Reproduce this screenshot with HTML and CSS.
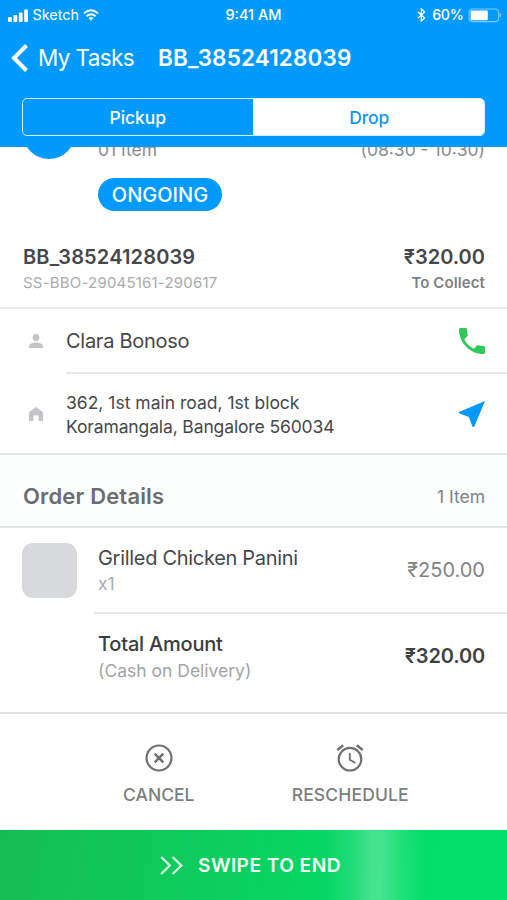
FILE: index.html
```html
<!DOCTYPE html>
<html lang="en">
<head>
<meta charset="utf-8">
<title>My Tasks</title>
<link rel="stylesheet" href="styles.css">
</head>
<body>
<header class="header">
  <div class="status">
    <div class="status-left">
      <svg class="signal" width="20" height="13" viewBox="0 0 20 13"><rect x="0" y="8" width="3.8" height="5" rx="1"/><rect x="5.4" y="6" width="3.8" height="7" rx="1"/><rect x="10.8" y="3.500" width="3.8" height="9.500" rx="1"/><rect x="16.2" y="0.500" width="3.8" height="12.500" rx="1"/></svg>
      <span class="carrier">Sketch</span>
      <svg class="wifi" width="16" height="12" viewBox="0 0 16 12"><path d="M1 4.400Q8 -1.800 15 4.400M3.500 7.200Q8 3.200 12.500 7.200" fill="none" stroke="#fff" stroke-width="1.900"/><path d="M5.500 9Q8 6.800 10.500 9L8 11.700Z"/></svg>
    </div>
    <span class="time">9:41 AM</span>
    <div class="status-right">
      <svg class="bluetooth" width="9" height="14" viewBox="0 0 9 14"><path d="M1 4L7.600 10 4.300 13V1L7.600 4 1 10" fill="none" stroke="#fff" stroke-width="1.300"/></svg>
      <span class="percent">60%</span>
      <svg class="battery" width="34" height="15" viewBox="0 0 34 15"><rect x="1" y="1" width="29.500" height="12.600" rx="3" fill="none" stroke="#fff" stroke-opacity=".45" stroke-width="1.100"/><rect x="2.600" y="2.400" width="17.200" height="9.800" rx="1"/><path d="M31.600 5c1.800.7 1.800 4 0 4.700z" opacity=".6"/></svg>
    </div>
  </div>
  <nav class="nav">
    <svg class="back" width="17" height="28" viewBox="0 0 17 28"><path d="M15.500 1.500L3 14 15.500 26.500" fill="none" stroke="#fff" stroke-width="4"/></svg>
    <span class="nav-back">My Tasks</span>
    <h1 class="nav-title">BB_38524128039</h1>
  </nav>
  <div class="segmented">
    <span class="segment">Pickup</span>
    <span class="segment segment-on">Drop</span>
  </div>
</header>

<section class="summary">
  <div class="slot">
    <span class="avatar"></span>
    <span class="slot-items">01 Item</span>
    <span class="slot-time">(08:30 - 10:30)</span>
  </div>
  <div class="badge">ONGOING</div>
  <div class="order">
    <div>
      <div class="order-id">BB_38524128039</div>
      <div class="order-ref">SS-BBO-29045161-290617</div>
    </div>
    <div class="order-pay">
      <div class="price price-dark">₹320.00</div>
      <div class="collect">To Collect</div>
    </div>
  </div>
</section>

<section class="contact">
  <div class="row row-person">
    <svg class="row-icon" width="14" height="14" viewBox="0 0 14 14"><circle cx="7" cy="3.500" r="3.400"/><path d="M0 14v-1.800C0 9.800 4 8.600 7 8.600s7 1.200 7 3.600V14z"/></svg>
    <div class="row-body">
      <span class="person">Clara Bonoso</span>
      <svg class="action" width="26" height="26" viewBox="3 3 18 18"><path fill="#32c75f" d="M6.620 10.790c1.440 2.830 3.760 5.140 6.590 6.590l2.200-2.200c.27-.27.67-.36 1.020-.24 1.120.37 2.330.57 3.570.57.550 0 1 .45 1 1V20c0 .55-.45 1-1 1-9.390 0-17-7.610-17-17 0-.55.450-1 1-1h3.500c.550 0 1 .45 1 1 0 1.250.2 2.450.57 3.570.110.35.030.74-.250 1.020l-2.200 2.200z"/></svg>
    </div>
  </div>
  <div class="row row-place">
    <svg class="row-icon" width="14" height="14" viewBox="0 0 14 14"><path d="M7 0L13.200 4.600Q14 5.200 14 6.200V14H9.600V9.600Q9.600 8.200 8.200 8.200H5.800Q4.400 8.200 4.400 9.600V14H0V6.200Q0 5.200 .8 4.600Z"/></svg>
    <div class="row-body">
      <div class="address"><div>362, 1st main road, 1st block</div><div class="address-city">Koramangala, Bangalore 560034</div></div>
      <svg class="action" width="26" height="26" viewBox="3 3 18 18"><path fill="#0798fc" d="M21 3L3 10.530v.980l6.840 2.650L12.480 21h.980L21 3z"/></svg>
    </div>
  </div>
</section>

<div class="details-head">
  <h2 class="details-title">Order Details</h2>
  <span class="details-count">1 Item</span>
</div>

<section class="items">
  <div class="item">
    <span class="thumb"></span>
    <div class="item-text">
      <div class="item-name">Grilled Chicken Panini</div>
      <div class="item-qty">x1</div>
    </div>
    <div class="price price-light">₹250.00</div>
  </div>
  <div class="total">
    <div class="item-text">
      <div class="total-name">Total Amount</div>
      <div class="total-note">(Cash on Delivery)</div>
    </div>
    <div class="price price-total">₹320.00</div>
  </div>
</section>

<section class="actions">
  <div class="choice">
    <svg width="28" height="28" viewBox="0 0 28 28"><circle cx="14" cy="14" r="12.500"/><path stroke-width="2.500" d="M9.700 9.700L18.300 18.300M18.300 9.700L9.700 18.300"/></svg>
    <span>CANCEL</span>
  </div>
  <div class="choice choice-later">
    <svg width="28" height="28" viewBox="0 0 28 28"><circle cx="14" cy="15.200" r="11.300"/><path d="M13.800 8.900V15.700L19.400 19.100" stroke-width="1.800"/><path d="M1.300 6L7.200 1.200M20.800 1.200L26.700 6" stroke-width="2.400"/></svg>
    <span>RESCHEDULE</span>
  </div>
</section>

<footer class="swipe">
  <svg width="23" height="19" viewBox="0 0 23 19"><path d="M1.200 1L9.800 9.500 1.200 18M12.600 1L21.200 9.500 12.600 18" fill="none" stroke="#d8ffe4" stroke-width="2.300"/></svg>
  <span class="swipe-label">SWIPE TO END</span>
</footer>
</body>
</html>
```

FILE: styles.css
```css
* { box-sizing: border-box; }
body {
  margin: 0;
  width: 507px;
  height: 900px;
  overflow: hidden;
  background: #fff;
  color: #45484b;
  font-family: Inter, "Liberation Sans", sans-serif;
  display: flex;
  flex-direction: column;
  white-space: nowrap;
}
h1, h2 { margin: 0; }
svg { display: block; flex: none; }

.header { height: 147px; flex: none; background: #029aff; color: #fff; }
.status {
  height: 30px;
  padding: 0 5px 0 8px;
  display: grid;
  grid-template-columns: 1fr auto 1fr;
  align-items: center;
  font-size: 14.500px;
  line-height: 30px;
  fill: #fff;
}
.status-left, .status-right { display: flex; align-items: center; }
.status-right { justify-content: flex-end; }
.carrier { margin-left: 4.500px; letter-spacing: -0.050px; }
.wifi { margin-left: 4px; margin-top: -1px; }
.time { font-weight: 500; font-size: 14.500px; margin-left: -3px; }
.percent { margin: 0 4.500px 0 6.500px; font-weight: 500; font-size: 14.200px; letter-spacing: -0.300px; }

.nav { height: 56px; display: flex; align-items: center; padding-left: 11px; line-height: 56px; }
.nav-back { margin-left: 10px; font-size: 22.500px; width: 120px; letter-spacing: -0.640px; }
.nav-title { font-size: 22.500px; font-weight: 600; letter-spacing: 0.150px; }

.segmented {
  margin: 12px 22px 0;
  height: 38px;
  border: 1.500px solid #d5efff;
  border-radius: 5px;
  display: flex;
  overflow: hidden;
  font-size: 17.500px;
  font-weight: 500;
  letter-spacing: -0.100px;
}
.segment { flex: 1; display: flex; align-items: center; justify-content: center; }
.segment-on { background: #fff; color: #0f96f3; padding-left: 2px; }

.summary { height: 162px; flex: none; border-bottom: 2px solid #ebebec; overflow: hidden; padding: 0 22px 0 23px; }
.slot { height: 31px; display: flex; align-items: flex-start; color: #8a8b8d; font-size: 17.500px; line-height: 24px; }
.avatar { width: 52px; height: 52px; margin: -40px 23px 0 0; border-radius: 50%; background: #029aff; }
.slot-items, .slot-time { margin-top: -9px; }
.slot-time { margin-left: auto; }
.badge {
  margin-left: 75px;
  width: 124px;
  height: 33px;
  border-radius: 17px;
  background: #029aff;
  color: #fff;
  font-size: 20px;
  font-weight: 500;
  display: flex;
  align-items: center;
  justify-content: center;
}
.order { display: flex; justify-content: space-between; margin-top: 33px; line-height: 26px; }
.order-id { font-size: 20px; font-weight: 600; letter-spacing: 0.150px; }
.order-ref { font-size: 15px; color: #a9abad; letter-spacing: 0.200px; }
.order-pay { text-align: right; }
.price { font-size: 20px; }
.price-dark { font-weight: 600; }
.collect { font-size: 15px; font-weight: 600; color: #7d7f81; letter-spacing: 0.100px; }

.row { display: flex; align-items: center; padding-left: 29px; }
.row-icon { fill: #c3c4c5; margin-right: 23px; }
.row-person .row-icon { margin-top: -2px; }
.row-body { flex: 1; display: flex; align-items: center; justify-content: space-between; padding-right: 22px; align-self: stretch; }
.row-person { height: 65px; }
.row-person .row-body { border-bottom: 2px solid #e8e8e9; }
.row-place { height: 81px; border-bottom: 2px solid #e5e6e7; }
.person { font-size: 20px; letter-spacing: -0.270px; }
.address { font-size: 17.500px; line-height: 24px; padding-top: 2px; }
.address-city { letter-spacing: -0.130px; }

.details-head {
  height: 73px;
  flex: none;
  padding: 11px 22px 0 23px;
  display: flex;
  align-items: center;
  justify-content: space-between;
  background: #fcfdfd;
  border-bottom: 2px solid #e2e3e4;
}
.details-title { font-size: 22px; font-weight: 600; color: #6b6d70; letter-spacing: 0.160px; }
.details-count { font-size: 17.500px; color: #808284; padding-top: 1px; }

.items { height: 186px; flex: none; border-bottom: 2px solid #e2e3e4; }
.item { height: 84px; display: flex; padding: 15px 22px 0 22px; }
.thumb { width: 55px; height: 55px; border-radius: 11px; background: #d7d9da; margin-right: 21px; }
.item-text { flex: 1; line-height: 26px; }
.item .item-text { margin-top: 2px; }
.item .price { line-height: 54px; color: #818386; }
.item-name { font-size: 20px; letter-spacing: -0.300px; }
.item-qty { font-size: 17.500px; color: #a9abad; }
.total { margin-left: 94px; padding: 17px 22px 0 4px; border-top: 2px solid #e8e8e9; display: flex; }
.total-name { font-size: 20px; font-weight: 500; color: #3a3c3f; letter-spacing: -0.200px; }
.total-note { font-size: 17.500px; line-height: 27px; color: #a2a3a5; }
.price-total { font-weight: 600; color: #3f4245; line-height: 50px; letter-spacing: -0.150px; }

.actions { height: 116px; flex: none; display: flex; padding-left: 63px; }
.choice {
  width: 191.500px;
  padding-top: 30px;
  display: flex;
  flex-direction: column;
  align-items: center;
  gap: 11px;
  color: #7c7e81;
  font-size: 17.500px;
  font-weight: 500;
  line-height: 24px;
}
.choice-later { letter-spacing: 0.150px; }
.choice svg { fill: none; stroke: #6e7073; stroke-width: 2.200; }

.swipe {
  flex: 1;
  display: flex;
  align-items: center;
  padding-left: 160px;
  gap: 15px;
  color: #f0fff5;
  background:
    linear-gradient(90deg, transparent 325px, rgba(255,255,255,.12) 355px, rgba(255,255,255,.26) 372px, rgba(255,255,255,.26) 381px, rgba(255,255,255,.12) 399px, transparent 425px),
    linear-gradient(100deg, #16bd52, #02df6b 85%);
}
.swipe-label { font-size: 19.200px; font-weight: 600; letter-spacing: 0.420px; }
```
